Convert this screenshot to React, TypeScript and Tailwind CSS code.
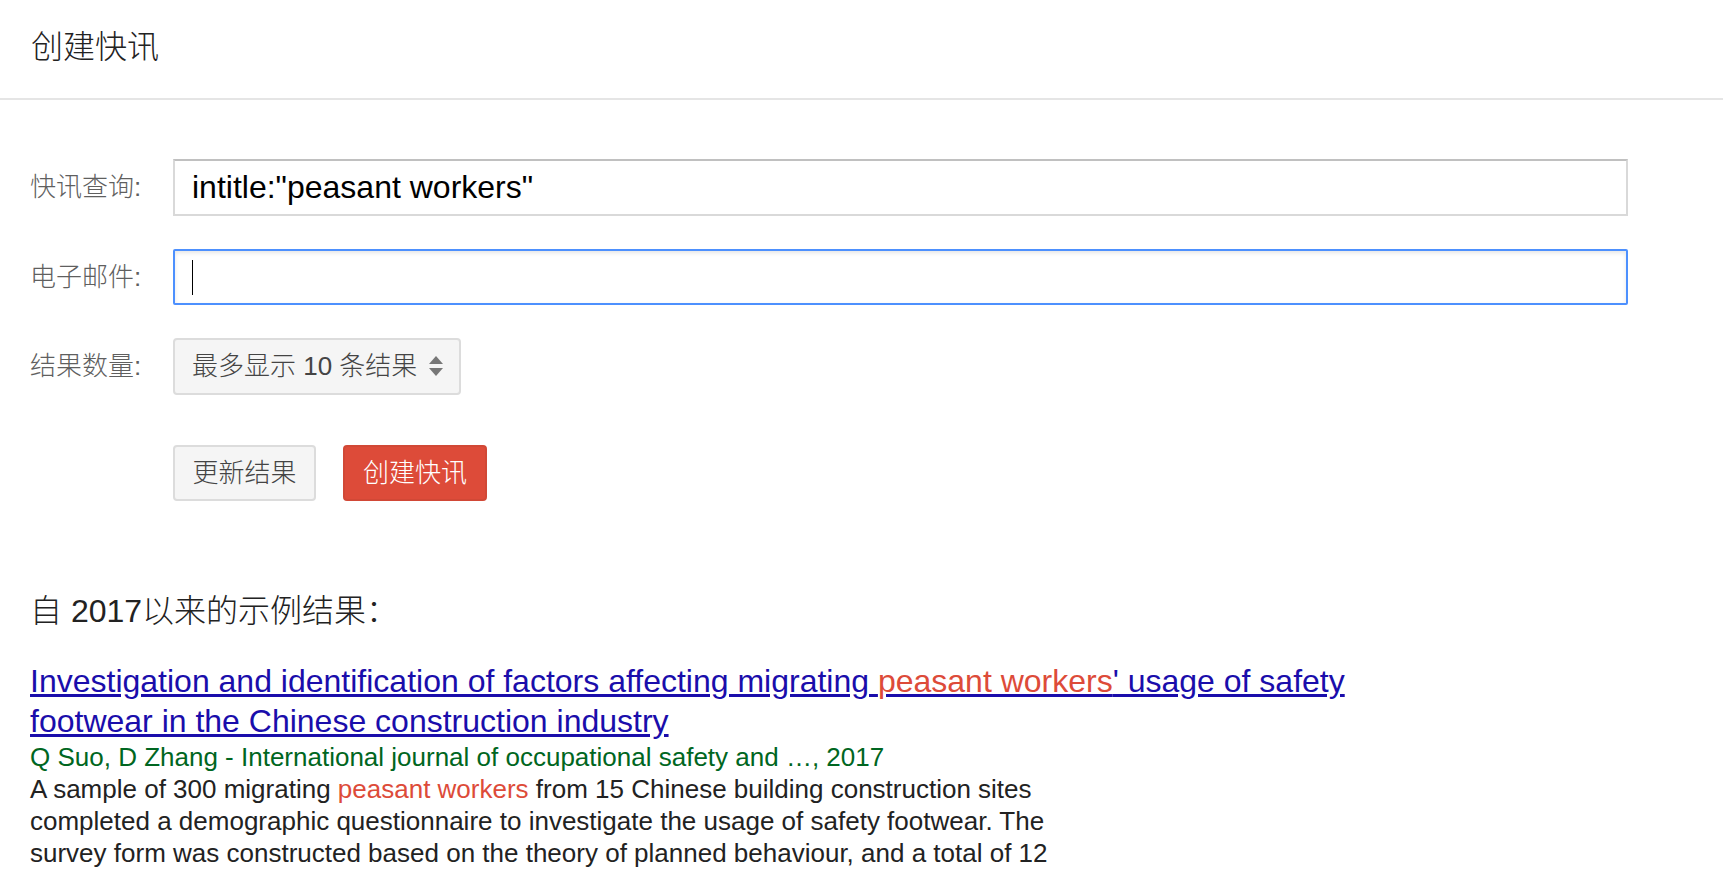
import React from "react";

const ArrowsIcon = () => (
  <svg width="14" height="21" viewBox="0 0 14 21" className="shrink-0">
    <path d="M7 0 L14 8 L0 8 Z" fill="#777" />
    <path d="M0 12 L14 12 L7 20 Z" fill="#777" />
  </svg>
);

export default function App() {
  return (
    <div className="min-h-screen bg-white font-['Liberation_Sans','Noto_Sans_CJK_SC',sans-serif]">
      {/* Header */}
      <div className="h-[100px] border-b-2 border-[#e5e5e5] flex items-center pl-[31px] pb-1">
        <h1 className="text-[32px] leading-[40px] text-[#222] font-light">创建快讯</h1>
      </div>

      {/* Alert form */}
      <div className="pl-[30px] pr-[95px] pt-[59px]">
        <div className="flex items-center h-[57px]">
          <label className="w-[143px] shrink-0 text-[26px] text-[#5f5f5f] font-light">快讯查询:</label>
          <input
            readOnly
            defaultValue={'intitle:"peasant workers"'}
            className="flex-1 h-[57px] px-[17px] border-2 border-[#d9d9d9] border-t-[#c0c0c0] text-[32px] text-black outline-none bg-white"
          />
        </div>

        <div className="flex items-center h-[56px] mt-[33px]">
          <label className="w-[143px] shrink-0 text-[26px] text-[#5f5f5f] font-light">电子邮件:</label>
          <div className="flex-1 h-[56px] px-[17px] border-2 border-[#4d90fe] rounded-[2px] shadow-[inset_0_2px_4px_rgba(0,0,0,0.1)] flex items-center">
            <span className="w-px h-[35px] bg-black" />
          </div>
        </div>

        <div className="flex items-center h-[57px] mt-[33px]">
          <label className="w-[143px] shrink-0 text-[26px] text-[#5f5f5f] font-light">结果数量:</label>
          <div className="w-[288px] h-[57px] pl-[17px] pr-[16px] bg-[#f5f5f5] border-2 border-[#dcdcdc] rounded-[4px] flex items-center justify-between">
            <span className="text-[26px] text-[#444] font-light whitespace-nowrap">最多显示 10 条结果</span>
            <ArrowsIcon />
          </div>
        </div>

        <div className="flex items-center gap-[27px] ml-[143px] mt-[50px]">
          <button className="w-[143px] h-[56px] bg-[#f5f5f5] border-2 border-[#dcdcdc] rounded-[4px] text-[26px] text-[#444] font-light">
            更新结果
          </button>
          <button className="w-[144px] h-[56px] bg-[#dd4b39] border-2 border-[#d14836] rounded-[4px] text-[26px] text-white font-light">
            创建快讯
          </button>
        </div>
      </div>

      {/* Sample results */}
      <div className="pl-[30px] mt-[90px]">
        <h2 className="text-[32px] leading-[40px] text-[#222] font-light">自 2017以来的示例结果：</h2>

        <div className="mt-[30px]">
          <a href="#" className="block max-w-[1400px] text-[32px] leading-[40px] text-[#1a0dab] underline">
            Investigation and identification of factors affecting migrating{" "}
            <span className="text-[#dd4b39]">peasant workers</span>&apos; usage of safety footwear in the Chinese
            construction industry
          </a>
          <div className="text-[26px] leading-[32px] text-[#006621]">
            Q Suo, D Zhang - International journal of occupational safety and …, 2017
          </div>
          <p className="max-w-[1060px] text-[26px] leading-[32px] text-[#222]">
            A sample of 300 migrating <span className="text-[#dd4b39]">peasant workers</span> from 15 Chinese building
            construction sites completed a demographic questionnaire to investigate the usage of safety footwear. The
            survey form was constructed based on the theory of planned behaviour, and a total of 12 questions were
            designed …
          </p>
        </div>
      </div>
    </div>
  );
}
